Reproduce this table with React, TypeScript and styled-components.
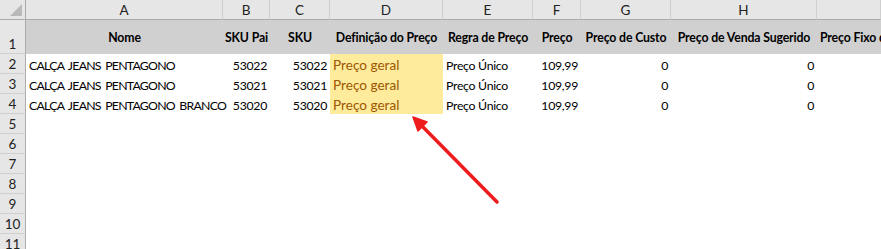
import React from "react";
import styled, { createGlobalStyle } from "styled-components";

const Global = createGlobalStyle`
  html, body { margin: 0; padding: 0; background: #fff; overflow: hidden; }
  body { font-family: "Lato", "Open Sans", sans-serif; }
`;

const COLS = "26px 197px 47px 60px 113px 90px 48px 90px 146px 1fr";

const Sheet = styled.div`
  position: relative;
  width: 881px;
  height: 249px;
  overflow: hidden;
  display: flex;
  flex-direction: column;
  color: #000;
`;

const Row = styled.div<{ $h: number }>`
  display: grid;
  grid-template-columns: ${COLS};
  height: ${(p) => p.$h}px;
  flex: 0 0 auto;
`;

const Corner = styled.div`
  position: relative;
  background: #e6e6e6;
  border-right: 1px solid #ababab;
  border-bottom: 1px solid #ababab;
  box-sizing: border-box;
  &::after {
    content: "";
    position: absolute;
    right: 3px;
    bottom: 3px;
    width: 0;
    height: 0;
    border-left: 12px solid transparent;
    border-bottom: 12px solid #b9b9b9;
  }
`;

const ColHead = styled.div`
  background: #e6e6e6;
  border-right: 1px solid #cfcfcf;
  border-bottom: 1px solid #ababab;
  box-sizing: border-box;
  display: flex;
  align-items: center;
  justify-content: center;
  font-size: 13.5px;
  color: #222;
  white-space: nowrap;
  overflow: hidden;
`;

const RowHead = styled.div`
  background: #e6e6e6;
  border-right: 1px solid #ababab;
  border-bottom: 1px solid #cfcfcf;
  box-sizing: border-box;
  display: flex;
  align-items: flex-end;
  justify-content: center;
  padding-bottom: 1px;
  font-size: 13.5px;
  color: #222;
`;

const TitleCell = styled.div<{ $start?: boolean }>`
  background: #d0d0d0;
  display: flex;
  align-items: center;
  justify-content: ${(p) => (p.$start ? "flex-start" : "center")};
  padding-left: ${(p) => (p.$start ? "3px" : "0")};
  font-weight: 700;
  font-size: 12.3px;
  letter-spacing: -0.15px;
  white-space: nowrap;
  overflow: hidden;
  padding-top: 1px;
`;

const Cell = styled.div<{ $align?: "left" | "right"; $neutral?: boolean; $caps?: boolean }>`
  display: flex;
  align-items: center;
  justify-content: ${(p) => (p.$align === "right" ? "flex-end" : "flex-start")};
  padding: ${(p) => (p.$align === "right" ? "0 3px 0 0" : "0 0 0 3px")};
  background: ${(p) => (p.$neutral ? "#ffeb9c" : "transparent")};
  color: ${(p) => (p.$neutral ? "#9c5700" : "#000")};
  font-size: ${(p) => (p.$neutral ? "13.6px" : "12.3px")};
  letter-spacing: ${(p) => (p.$neutral ? "0" : p.$caps ? "-0.75px" : "-0.3px")};
  word-spacing: ${(p) => (p.$caps ? "2px" : "0")};
  white-space: nowrap;
  padding-top: 2px;
`;

const Arrow = styled.svg`
  position: absolute;
  left: 0;
  top: 0;
  pointer-events: none;
`;

const letters = ["A", "B", "C", "D", "E", "F", "G", "H", ""];
const titles = [
  "Nome",
  "SKU Pai",
  "SKU",
  "Definição do Preço",
  "Regra de Preço",
  "Preço",
  "Preço de Custo",
  "Preço de Venda Sugerido",
  "Preço Fixo de Venda",
];

const data = [
  ["CALÇA JEANS PENTAGONO", "53022", "53022"],
  ["CALÇA JEANS PENTAGONO", "53021", "53021"],
  ["CALÇA JEANS PENTAGONO BRANCO", "53020", "53020"],
];

export default function App() {
  return (
    <>
      <Global />
      <Sheet>
        <Row $h={20}>
          <Corner />
          {letters.map((l, i) => (
            <ColHead key={i}>{l}</ColHead>
          ))}
        </Row>
        <Row $h={34}>
          <RowHead>1</RowHead>
          {titles.map((t, i) => (
            <TitleCell key={i} $start={i === 8}>
              {t}
            </TitleCell>
          ))}
        </Row>
        {data.map((r, i) => (
          <Row $h={20} key={i}>
            <RowHead>{i + 2}</RowHead>
            <Cell $caps>{r[0]}</Cell>
            <Cell $align="right">{r[1]}</Cell>
            <Cell $align="right">{r[2]}</Cell>
            <Cell $neutral>Preço geral</Cell>
            <Cell>Preço Único</Cell>
            <Cell $align="right">109,99</Cell>
            <Cell $align="right">0</Cell>
            <Cell $align="right">0</Cell>
            <Cell />
          </Row>
        ))}
        {[5, 6, 7, 8, 9, 10, 11].map((n) => (
          <Row $h={20} key={n}>
            <RowHead>{n}</RowHead>
          </Row>
        ))}
        <Arrow width="881" height="249" viewBox="0 0 881 249">
          <line x1="497" y1="202" x2="422" y2="126" stroke="#ee1c1c" strokeWidth="3.5" strokeLinecap="round" />
          <polygon points="413,117 427,122 418,131" fill="#ee1c1c" stroke="#ee1c1c" strokeWidth="1.5" strokeLinejoin="round" />
        </Arrow>
      </Sheet>
    </>
  );
}
